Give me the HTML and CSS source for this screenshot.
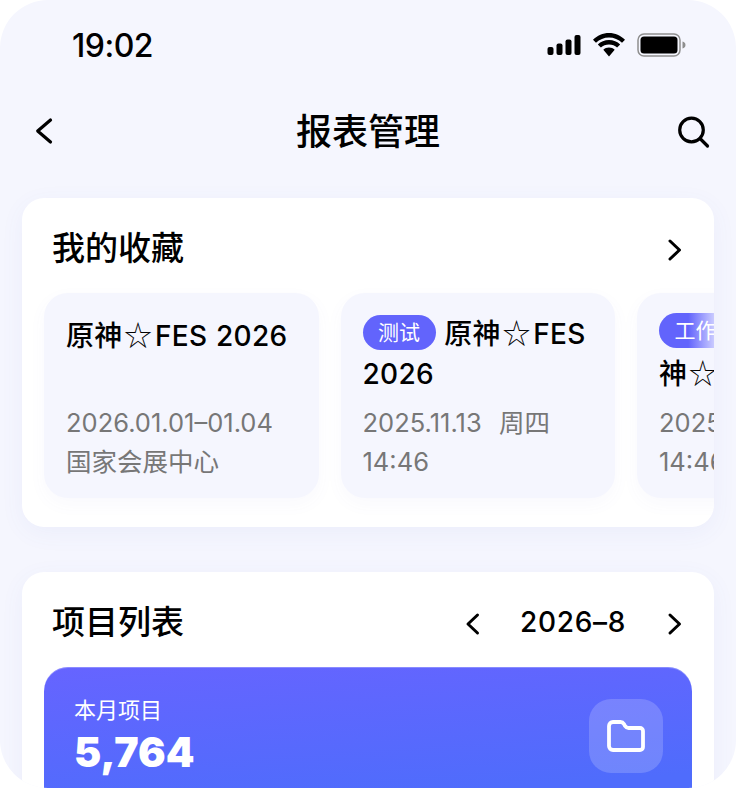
FILE: index.html
```html
<!DOCTYPE html>
<html lang="zh-CN">
<head>
  <meta charset="UTF-8">
  <meta name="viewport" content="width=device-width, initial-scale=1">
  <title>报表管理</title>
  <link rel="stylesheet" href="styles.css">
</head>
<body>

  <div class="phone">
    <div class="status-bar">
      <span class="time">19:02</span>
      <div class="status-icons">
        <svg width="34" height="20" viewBox="0 0 34 20"><rect x="0.500" y="12" width="6" height="8" rx="2"/><rect x="9.500" y="8.500" width="6" height="11.500" rx="2"/><rect x="18.500" y="4.500" width="6" height="15.500" rx="2"/><rect x="27.500" y="0" width="6" height="20" rx="2"/></svg>
        <svg width="34" height="24" viewBox="0 0 34 24"><path d="M17 4.500c-5 0-9.500 2-13 5.300l-3-3.100C5.300 2.600 10.900 0 17 0s11.700 2.600 16 6.700l-3 3.100C26.500 6.500 22 4.500 17 4.500z"/><path d="M17 11.500c-3.200 0-6 1.200-8.100 3.100l-3.100-3.200C8.700 8.700 12.600 7 17 7s8.300 1.700 11.200 4.400l-3.100 3.200c-2.100-1.900-4.900-3.100-8.100-3.100z"/><path d="M17 14.500c2.200 0 4.200.9 5.700 2.200L17 23.500l-5.700-6.800c1.500-1.300 3.500-2.200 5.700-2.200z"/></svg>
        <svg width="49" height="24" viewBox="0 0 49 24"><rect x="1" y="1" width="42" height="22" rx="6" fill="none" stroke="#8e8e8e" stroke-width="1.500"/><rect x="3.500" y="3.500" width="37" height="17" rx="3.500"/><path d="M45.500 8.500c1.800.5 3 1.800 3 3.500s-1.200 3-3 3.500z" fill="#8e8e8e"/></svg>
      </div>
    </div>

    <div class="nav-bar">
      <svg class="nav-icon" width="22" height="30" viewBox="0 0 22 30"><path d="M16.500 3 3.700 14l12.800 11"/></svg>
      <h1>报表管理</h1>
      <svg class="nav-icon nav-search" width="34" height="34" viewBox="0 0 34 34"><circle cx="15.500" cy="15" r="11.800"/><path d="m24 23.500 7.500 7.500"/></svg>
    </div>

    <section class="card">
      <div class="card-head">
        <h2>我的收藏</h2>
        <svg class="arrow" width="18" height="26" viewBox="0 0 18 26"><path d="m4 4 9.500 9L4 22"/></svg>
      </div>
      <div class="fav-list">
        <div class="fav-item">
          <div class="fav-title fav-title-plain">原神<span class="star">☆</span>FES 2026</div>
          <div class="fav-meta">2026.01.01–01.04<br>国家会展中心</div>
        </div>
        <div class="fav-item">
          <div class="fav-title"><span class="tag">测试</span> 原神<span class="star">☆</span>FES 2026</div>
          <div class="fav-meta">2025.11.13&nbsp; 周四<br>14:46</div>
        </div>
        <div class="fav-item">
          <div class="fav-title"><span class="tag tag-fade">工作</span><br>神<span class="star">☆</span>FES 2026</div>
          <div class="fav-meta">2025.11.13&nbsp; 周四<br>14:46</div>
        </div>
      </div>
    </section>

    <section class="card card-projects">
      <div class="card-head">
        <h2>项目列表</h2>
        <div class="month-picker">
          <svg class="arrow" width="18" height="26" viewBox="0 0 18 26"><path d="M13.500 4 4 13l9.500 9"/></svg>
          <span class="month">2026–8</span>
          <svg class="arrow" width="18" height="26" viewBox="0 0 18 26"><path d="m4 4 9.500 9L4 22"/></svg>
        </div>
      </div>
      <div class="banner">
        <div>
          <div class="banner-label">本月项目</div>
          <div class="banner-num">5,764</div>
        </div>
        <div class="banner-icon">
          <svg width="38" height="32" viewBox="0 0 38 32"><path d="M2 6a4 4 0 0 1 4-4h7.500a4 4 0 0 1 3.400 1.900l1.200 2.200a4 4 0 0 0 3.400 1.900H33a3 3 0 0 1 3 3V27a3 3 0 0 1-3 3H6a4 4 0 0 1-4-4z"/></svg>
        </div>
      </div>
    </section>
  </div>

</body>
</html>
```

FILE: styles.css
```css
html, body {
  margin: 0;
  padding: 0;
  background: #fff;
}
body {
  font-family: 'Inter', 'Noto Sans CJK SC', sans-serif;
  color: #000;
}
.phone {
  width: 736px;
  height: 788px;
  background: #f5f6fe;
  border-radius: 48px;
  overflow: hidden;
}
.status-bar {
  height: 90px;
  padding: 0 50px 0 72px;
  box-sizing: border-box;
  display: flex;
  align-items: center;
  justify-content: space-between;
}
.time {
  font-size: 32px;
  font-weight: 500;
  letter-spacing: -0.5px;
}
.status-icons {
  display: flex;
  align-items: center;
  gap: 11px;
}
.nav-bar {
  height: 84px;
  padding: 0 26px 0 34px;
  display: grid;
  grid-template-columns: 1fr auto 1fr;
  align-items: center;
}
.nav-bar h1 {
  margin: 0 8px 0 0;
  font-size: 36px;
  line-height: 52px;
  font-weight: 500;
}
.nav-search {
  justify-self: end;
}
.nav-icon {
  fill: none;
  stroke: #000;
  stroke-width: 3.200;
  stroke-linecap: round;
  stroke-linejoin: round;
}
.card {
  margin: 24px 22px 0;
  height: 329px;
  background: #fff;
  border-radius: 22px;
  box-shadow: 0 6px 24px rgba(90, 100, 200, 0.06);
  overflow: hidden;
}
.card-projects {
  margin-top: 45px;
  height: 300px;
}
.card-head {
  height: 95px;
  padding: 0 30px;
  box-sizing: border-box;
  display: flex;
  align-items: center;
  justify-content: space-between;
}
.card-head h2 {
  margin: 5px 0 0;
  font-size: 33px;
  line-height: 48px;
  font-weight: 500;
}
.arrow {
  margin-top: 8px;
  fill: none;
  stroke: #000;
  stroke-width: 3;
  stroke-linecap: round;
  stroke-linejoin: round;
}
.fav-list {
  display: flex;
  gap: 22px;
  padding-left: 22px;
}
.fav-item {
  flex: 0 0 274.500px;
  height: 205px;
  padding: 22px;
  box-sizing: border-box;
  background: #f5f6fe;
  border-radius: 24px;
  box-shadow: 0 6px 18px rgba(90, 100, 200, 0.04);
}
.fav-title {
  height: 92px;
  margin-top: -3px;
  font-size: 28px;
  line-height: 40px;
  font-weight: 450;
  letter-spacing: 0.300px;
  word-spacing: 1px;
}
.fav-title-plain {
  margin-top: -1px;
  height: 90px;
}
.star {
  margin: 0 2.500px 0 1.500px;
  font-family: 'Noto Sans CJK SC', sans-serif;
  font-weight: 300;
}
.tag {
  display: inline-block;
  padding: 0 15.500px;
  height: 35px;
  line-height: 35px;
  border-radius: 18px;
  background: #6264fc;
  color: #fff;
  font-size: 21px;
  font-weight: 400;
  letter-spacing: 0;
  vertical-align: 4px;
}
.tag-fade {
  background: linear-gradient(90deg, #6264fc 40%, #c9caff 75%);
}
.fav-meta {
  font-size: 25.500px;
  line-height: 38.500px;
  word-spacing: 1.500px;
  color: #777;
}
.month-picker {
  display: flex;
  align-items: center;
  gap: 38px;
}
.month {
  margin: 4px 2px 0 0;
  font-size: 28px;
  font-weight: 450;
  letter-spacing: 0.700px;
}
.banner {
  margin: 0 22px;
  height: 200px;
  padding: 31px 29px 0 30px;
  box-sizing: border-box;
  display: flex;
  align-items: flex-start;
  justify-content: space-between;
  border-radius: 24px;
  background: linear-gradient(176deg, #6664ff 0%, #4f6cfc 62%);
  box-shadow: inset 0 1px 0 rgba(255, 255, 255, 0.25);
  color: #fff;
}
.banner-label {
  font-size: 22px;
  line-height: 24px;
}
.banner-num {
  margin-top: 7px;
  font-size: 41px;
  line-height: 46px;
  font-weight: 900;
}
.banner-icon {
  width: 74px;
  height: 74px;
  margin-top: 1px;
  border-radius: 22px;
  background: rgba(255, 255, 255, 0.18);
  display: flex;
  align-items: center;
  justify-content: center;
}
.banner-icon svg {
  fill: none;
  stroke: #fff;
  stroke-width: 3.800;
  stroke-linejoin: round;
}
```
